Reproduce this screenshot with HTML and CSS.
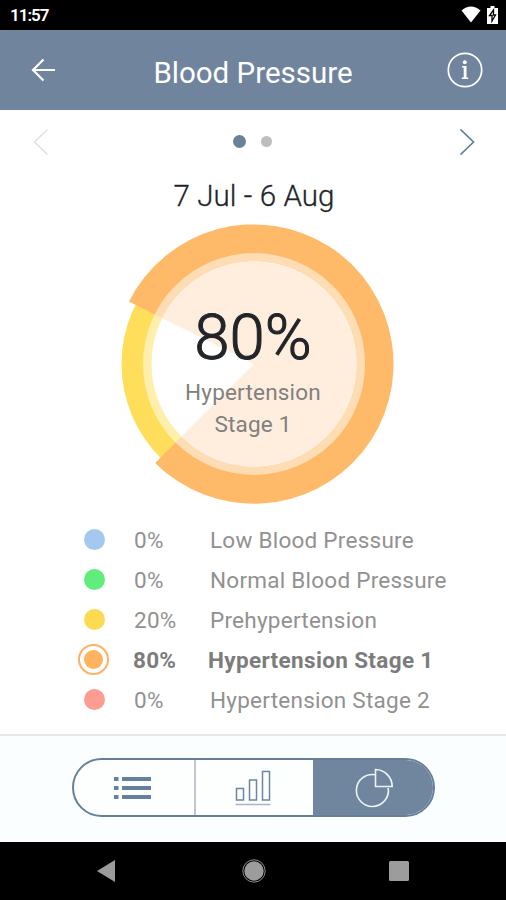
FILE: index.html
```html
<!DOCTYPE html>
<html lang="en">
<head>
    <meta charset="UTF-8">
    <meta name="viewport" content="width=device-width, initial-scale=1.0">
    <title>Blood Pressure</title>
    <link rel="stylesheet" href="styles.css">
</head>
<body>
    <div class="status-bar">
        <span class="clock">11:57</span>
        <div class="status-icons">
            <svg width="20" height="17" viewBox="0 0 20 17"><path d="M0.500 4.500Q10-3.500 19.500 4.500L10 16.500Z" fill="#fff"/></svg>
            <svg width="11" height="18" viewBox="0 0 11 18"><path d="M3.500 0h4v2H11v16H0V2h3.500Z" fill="#fff"/><path d="M6.500 4 2.500 9.500h2.500V15l3.500-6H6.500Z" fill="#fff" stroke="#000" stroke-width="1.300"/></svg>
        </div>
    </div>

    <header>
        <svg class="back" width="24" height="24" viewBox="0 0 24 24" fill="none" stroke="#fff" stroke-width="2.200"><path d="M12.500 1.500 2 12l10.500 10.500M2 12h22"/></svg>
        <h1 class="title">Blood Pressure</h1>
        <svg class="info" width="36" height="36" viewBox="0 0 36 36"><circle cx="18" cy="18" r="16.700" fill="none" stroke="#fff" stroke-width="1.700"/><circle cx="17.800" cy="10.300" r="2" fill="#fff"/><path d="M15 14h4.500v11.500h1.700v1.500H14.800v-1.500h1.900V15.500H15Z" fill="#fff"/></svg>
    </header>

    <main>
        <div class="pager">
            <svg width="16" height="26" viewBox="0 0 16 26" fill="none" stroke="#dedede" stroke-width="1.300"><path d="M14.500 0.500 1.500 13l13 12.500"/></svg>
            <div class="dots">
                <span class="dot dot-active"></span>
                <span class="dot"></span>
            </div>
            <svg width="16" height="26" viewBox="0 0 16 26" fill="none" stroke="#5f7fa0" stroke-width="1.700"><path d="M1.500 0.500 14.500 13l-13 12.500"/></svg>
        </div>

        <h2 class="period">7 Jul - 6 Aug</h2>

        <div class="chart">
            <svg width="280" height="280" viewBox="-140 -140 280 280">
                <circle r="132.500" fill="#fede5b"/>
                <path d="M0 0-98.900 98.900A139.700 139.700 0 1 0-125.100-62.400Z" fill="#feba69"/>
                <circle r="111" fill="#fff" fill-opacity="0.500"/>
                <circle r="102.500" fill="#fff"/>
                <path d="M0 0-72.500 72.500A102.500 102.500 0 1 0-91.700-45.800Z" fill="#ffeedd"/>
            </svg>
            <div class="chart-label">
                <div class="chart-value">80%</div>
                <div class="chart-name">Hypertension<br>Stage 1</div>
            </div>
        </div>

        <ul class="legend">
            <li><span class="swatch low"></span><span class="percent">0%</span><span class="name">Low Blood Pressure</span></li>
            <li><span class="swatch normal"></span><span class="percent">0%</span><span class="name">Normal Blood Pressure</span></li>
            <li><span class="swatch pre"></span><span class="percent">20%</span><span class="name">Prehypertension</span></li>
            <li class="selected"><span class="swatch stage1"></span><span class="percent">80%</span><span class="name">Hypertension Stage 1</span></li>
            <li><span class="swatch stage2"></span><span class="percent">0%</span><span class="name">Hypertension Stage 2</span></li>
        </ul>
    </main>

    <footer>
        <div class="tabs">
            <div class="tab tab-list">
                <svg width="37" height="24" viewBox="0 0 37 24" fill="#64809d"><path d="M0 1h4.500v4H0zM8 1h29v4H8zM0 10h4.500v4H0zM8 10h29v4H8zM0 19h4.500v4H0zM8 19h29v4H8z"/></svg>
            </div>
            <div class="tab tab-bars">
                <svg width="36" height="36" viewBox="0 0 36 36" fill="none" stroke="#6d859f" stroke-width="1.500"><path d="M1.500 18.500h7v11.500h-7zM14.500 10h7v20h-7zM27.500 1.500h7v28.500h-7z"/><path d="M0.500 34.500h35" stroke="#a9b5c3"/></svg>
            </div>
            <div class="tab tab-active">
                <svg width="40" height="40" viewBox="0 0 40 40" fill="none" stroke="#edf4fa" stroke-width="1.600"><path d="M22 6.700A16 16 0 1 0 35.200 20"/><path d="M22.500 1.500v17h16.700A17 17 0 0 0 22.500 1.500Z"/></svg>
            </div>
        </div>
    </footer>

    <nav class="system-nav">
        <svg width="18" height="22" viewBox="0 0 18 22"><path d="M18 0v22L0 11Z" fill="#9c9c9c"/></svg>
        <svg class="home" width="24" height="24" viewBox="0 0 24 24"><circle cx="12" cy="12" r="11.200" fill="none" stroke="#8c8c8c"/><circle cx="12" cy="12" r="9.700" fill="#9c9c9c"/></svg>
        <svg width="20" height="20" viewBox="0 0 20 20"><rect width="20" height="20" rx="1.500" fill="#9c9c9c"/></svg>
    </nav>
</body>
</html>
```

FILE: styles.css
```css
* {
    box-sizing: border-box;
}
body {
    font-family: Roboto, sans-serif;
    background-color: #fff;
    color: #212529;
    margin: 0;
    height: 900px;
    display: flex;
    flex-direction: column;
    overflow: hidden;
}
svg {
    display: block;
    flex-shrink: 0;
}
.status-bar {
    height: 30px;
    background-color: #000;
    display: flex;
    justify-content: space-between;
    padding: 0 8px 0 10px;
}
.clock {
    color: #fff;
    font-size: 17px;
    font-weight: 600;
    line-height: 31px;
    letter-spacing: -1px;
}
.status-icons {
    display: flex;
    gap: 6px;
    padding-top: 6px;
}
header {
    height: 80px;
    background-color: #70859d;
    display: flex;
    align-items: center;
    justify-content: space-between;
    padding: 0 23px 0 31px;
}
.title {
    color: #fff;
    font-size: 29.5px;
    font-weight: 400;
    line-height: 40px;
    margin: 5px 0 0 4px;
}
main {
    height: 624px;
}
.pager {
    height: 63px;
    display: flex;
    align-items: center;
    justify-content: space-between;
    padding: 0 31px 0 33px;
}
.dots {
    display: flex;
    align-items: center;
    gap: 15px;
    margin-right: 3px;
}
.dot {
    width: 11px;
    height: 11px;
    border-radius: 50%;
    background-color: #bdbdbd;
}
.dot-active {
    width: 13px;
    height: 13px;
    background-color: #6a8299;
}
.period {
    margin: 0;
    height: 51px;
    padding: 3px 0 0 2px;
    font-size: 29.5px;
    font-weight: 300;
    line-height: 40px;
    text-align: center;
    letter-spacing: 0.1px;
    -webkit-text-stroke: 0.3px #212529;
}
.chart {
    position: relative;
    width: 280px;
    height: 280px;
    margin: 0 auto 0 114px;
}
.chart-label {
    position: absolute;
    inset: 0;
    padding: 77px 2px 0 0;
    text-align: center;
}
.chart-value {
    font-size: 63.5px;
    font-weight: 300;
    line-height: 74px;
    -webkit-text-stroke: 1px #212529;
}
.chart-name {
    margin-top: 2px;
    color: #808080;
    font-size: 22.5px;
    line-height: 31.5px;
    letter-spacing: 0.2px;
}
.legend {
    list-style: none;
    margin: 0;
    padding: 16px 0 0 78px;
    color: #919191;
    font-size: 22.5px;
    letter-spacing: 0.25px;
}
.legend li {
    display: flex;
    height: 40px;
    line-height: 41px;
}
.swatch {
    width: 21px;
    height: 21px;
    margin: 9px 29px 0 6px;
    border-radius: 50%;
}
.low { background-color: #a5c8f0; }
.normal { background-color: #60ed7c; }
.pre { background-color: #fcdb52; }
.stage1 { background-color: #feb35e; }
.stage2 { background-color: #fd9d92; }
.percent {
    width: 76px;
}
.selected {
    color: #7c7c7c;
    font-weight: 700;
}
.selected .swatch {
    width: 31px;
    height: 31px;
    margin: 4px 24px 0 0;
    border: 2px solid #feb165;
    padding: 4px;
    background-clip: content-box;
}
.selected .percent {
    width: 75px;
}
.selected .name {
    letter-spacing: 0.35px;
}
footer {
    height: 108px;
    border-top: 2px solid #e4e8e8;
    background-color: #fafeff;
    padding: 22px 0 0 72px;
}
.tabs {
    display: flex;
    width: 363px;
    height: 59px;
    border: 2px solid #667f99;
    border-radius: 30px;
    overflow: hidden;
    background-color: #fdffff;
}
.tab {
    width: 120px;
    display: flex;
    align-items: center;
    justify-content: center;
}
.tab + .tab {
    border-left: 2px solid #bfc6cd;
}
.tab-list {
    padding-right: 2px;
}
.tab-bars {
    padding-right: 3px;
}
.tab + .tab-active {
    border-left: 0;
    background-color: #70869e;
}
.system-nav {
    height: 58px;
    background-color: #000;
    display: flex;
    align-items: center;
    justify-content: space-between;
    padding: 0 97px;
}
.home {
    margin-left: 3px;
}
```
